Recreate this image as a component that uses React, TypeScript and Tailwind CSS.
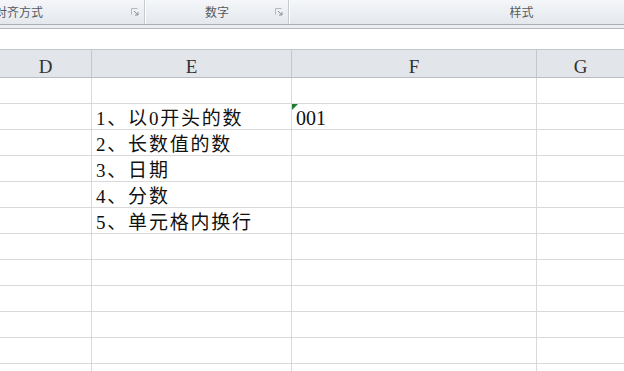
import React from 'react';

const items = ['1、以0开头的数', '2、长数值的数', '3、日期', '4、分数', '5、单元格内换行'];

function Launcher() {
  return (
    <svg width="8" height="8" viewBox="0 0 8 8" className="shrink-0">
      <path d="M0.5 0.5H6.5M0.5 0.5V6.5" stroke="#b4b9bf" strokeWidth="1" fill="none" />
      <path d="M3 3L7 7M7 4V7H4" stroke="#8c9299" strokeWidth="1" fill="none" />
    </svg>
  );
}

function Ribbon() {
  const label = 'text-[12px] text-[#555a60] leading-none';
  return (
    <div
      className="flex h-[25px] shrink-0 border-b border-[#aab0b7] bg-gradient-to-b from-[#f4f6f9] to-[#e4e8ed]"
      style={{ fontFamily: '"Noto Sans CJK SC", sans-serif' }}
    >
      <div className="flex w-[145px] items-center justify-between border-r border-[#c6cbd1] pr-[5px]">
        <span className={`${label} -ml-[5px]`}>对齐方式</span>
        <Launcher />
      </div>
      <div className="flex w-[144px] items-center border-r border-[#c6cbd1] pr-[5px] shadow-[inset_1px_0_0_#ffffff]">
        <span className={`${label} flex-1 pl-[14px] text-center`}>数字</span>
        <Launcher />
      </div>
      <div className="flex flex-1 items-center justify-center pl-[130px] shadow-[inset_1px_0_0_#ffffff]">
        <span className={label}>样式</span>
      </div>
    </div>
  );
}

function Row({ text, num, mark }: { text?: string; num?: string; mark?: boolean }) {
  return (
    <div className="flex h-[26px] shrink-0 border-b border-[#d9d9d9]">
      <div className="w-[92px] shrink-0 border-r border-[#d9d9d9]" />
      <div className="flex w-[200px] shrink-0 items-center border-r border-[#d9d9d9] pl-[4px] pt-[3px]">
        {text ? (
          <span
            className="text-[19px] leading-none tracking-[1.8px] text-[#111]"
            style={{ fontFamily: '"Liberation Serif", "Noto Sans CJK SC", serif' }}
          >
            {text}
          </span>
        ) : null}
      </div>
      <div className="relative flex w-[245px] shrink-0 items-center border-r border-[#d9d9d9] pl-[4px] pt-[3px]">
        {mark ? (
          <span className="absolute left-0 top-0 h-0 w-0 border-l-[6px] border-b-[6px] border-l-[#1e7b34] border-b-transparent" />
        ) : null}
        {num ? (
          <span
            className="text-[20px] leading-none text-[#111]"
            style={{ fontFamily: '"Liberation Serif", serif' }}
          >
            {num}
          </span>
        ) : null}
      </div>
      <div className="flex-1" />
    </div>
  );
}

export default function App() {
  const headers = [
    { l: 'D', w: 'w-[92px]' },
    { l: 'E', w: 'w-[200px]' },
    { l: 'F', w: 'w-[245px]' },
  ];
  return (
    <div className="flex h-[371px] w-[624px] flex-col overflow-hidden bg-white">
      <Ribbon />
      <div className="h-[4px] shrink-0 border-b border-[#b6bac0] bg-[#eceef1]" />
      <div className="h-[21px] shrink-0 border-b border-[#c3c7cc] bg-white" />
      <div
        className="flex h-[28px] shrink-0 border-b border-[#b9bdc3] bg-[#e2e5e9] text-[19px] text-[#333]"
        style={{ fontFamily: '"Liberation Serif", serif' }}
      >
        {headers.map((h) => (
          <div key={h.l} className={`flex ${h.w} shrink-0 items-center justify-center border-r border-[#c4c8cd] pt-[6px] leading-none`}>
            {h.l}
          </div>
        ))}
        <div className="flex flex-1 items-center justify-center pt-[6px] leading-none">G</div>
      </div>
      <Row />
      <Row text={items[0]} num="001" mark />
      {items.slice(1).map((t) => (
        <Row key={t} text={t} />
      ))}
      {[0, 1, 2, 3, 4, 5].map((i) => (
        <Row key={i} />
      ))}
    </div>
  );
}
